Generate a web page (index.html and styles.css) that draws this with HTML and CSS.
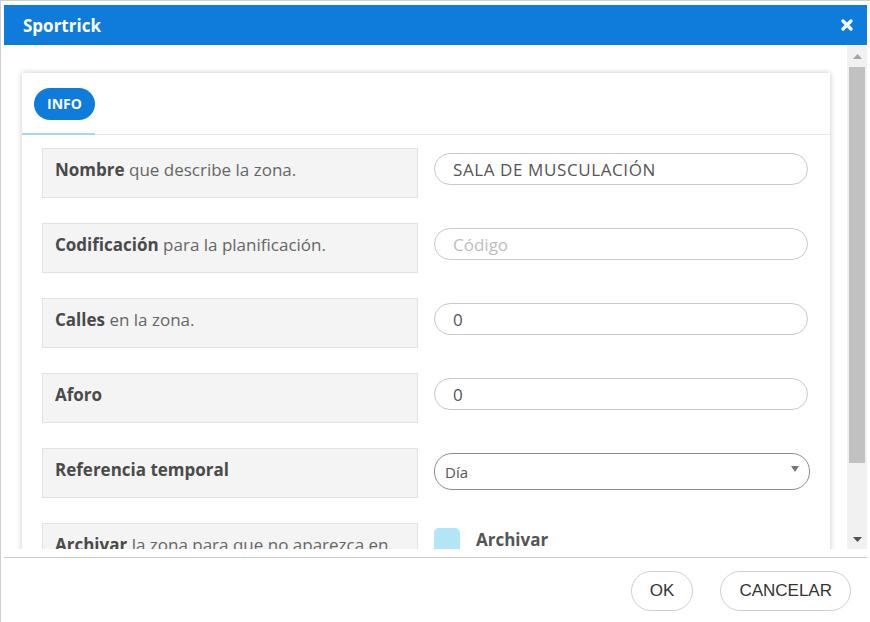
FILE: index.html
```html
<!DOCTYPE html>
<html lang="es">
  <head>
    <meta charset="UTF-8" />
    <meta name="viewport" content="width=device-width, initial-scale=1.0" />
    <title>Sportrick</title>
    <link rel="stylesheet" href="styles.css">
  </head>
  <body>
    <div class="dialog">
      <div class="titlebar">
        <span class="title">Sportrick</span>
        <svg class="close" width="12" height="12" viewBox="0 0 12 12">
          <path d="M2 2 L10 10 M10 2 L2 10" stroke="#fff" stroke-width="3.2" stroke-linecap="round" />
        </svg>
      </div>

      <div class="body">
        <div class="viewport">
          <div class="card">
            <div class="tabs">
              <div class="tabWrap"><span class="tab">INFO</span></div>
            </div>

            <div class="rows">
              <div class="row">
                <div class="label"><b>Nombre</b> que describe la zona.</div>
                <input class="input" type="text" value="SALA DE MUSCULACIÓN">
              </div>
              <div class="row">
                <div class="label"><b>Codificación</b> para la planificación.</div>
                <input class="input" type="text" placeholder="Código">
              </div>
              <div class="row">
                <div class="label"><b>Calles</b> en la zona.</div>
                <input class="input" type="text" value="0">
              </div>
              <div class="row">
                <div class="label"><b>Aforo</b></div>
                <input class="input" type="text" value="0">
              </div>
              <div class="row">
                <div class="label"><b>Referencia temporal</b></div>
                <div class="selectBox">
                  <span>Día</span>
                  <svg class="caret" width="8" height="6" viewBox="0 0 8 6"><path d="M0 0 H8 L4 6 Z" fill="#777" /></svg>
                </div>
              </div>
              <div class="row">
                <div class="label"><b>Archivar</b> la zona para que no aparezca en los listados de la planificación.</div>
                <div class="check">
                  <span class="checkbox"></span>
                  <span class="checkText">Archivar</span>
                </div>
              </div>
            </div>
          </div>
        </div>

        <div class="scrollbar">
          <svg class="arrow" width="9" height="5" viewBox="0 0 9 5"><path d="M0 5 L4.5 0 L9 5 Z" fill="#a3a3a3" /></svg>
          <div class="thumb"></div>
          <div class="track"></div>
          <svg class="arrow" width="9" height="5" viewBox="0 0 9 5"><path d="M0 0 L4.5 5 L9 0 Z" fill="#505050" /></svg>
        </div>
      </div>

      <div class="footer">
        <button class="btn">OK</button>
        <button class="btn">CANCELAR</button>
      </div>
    </div>
  </body>
</html>
```

FILE: styles.css
```css
* {
  margin: 0;
  padding: 0;
  box-sizing: border-box;
}
body {
  width: 870px;
  height: 622px;
  overflow: hidden;
  background-color: #fff;
  font-family: "Open Sans", Lato, sans-serif;
  color: #666;
}
.dialog {
  height: 622px;
  border-top: 1px solid #cfcfcf;
  border-left: 1px solid #cfcfcf;
  padding: 4px 3px 0 3px;
}
.titlebar {
  height: 40px;
  background-color: #0f7cdb;
  display: flex;
  align-items: center;
  justify-content: space-between;
  padding: 0 14px 0 19px;
}
.title {
  color: #fff;
  font-size: 17px;
  font-weight: 700;
}
.close {
  display: block;
}
.body {
  height: 503px;
  margin-top: 1px;
  display: flex;
}
.viewport {
  flex: 1;
  overflow: hidden;
  padding: 27px 17px 0 18px;
}
.card {
  background-color: #fff;
  box-shadow: 0 0 6px rgba(0, 0, 0, 0.22);
}
.tabs {
  border-bottom: 1px solid #e8e8e8;
}
.tabWrap {
  display: inline-block;
  padding: 15px 0 13px 12px;
  border-bottom: 2px solid #a8d4f5;
  margin-bottom: -1px;
}
.tab {
  display: block;
  width: 61px;
  height: 32px;
  line-height: 32px;
  border-radius: 16px;
  background-color: #0f7cdb;
  color: #fff;
  font-size: 14px;
  font-weight: 700;
  text-align: center;
}
.rows {
  padding: 13px 22px 0 20px;
}
.row {
  display: grid;
  grid-template-columns: 376px 1fr;
  column-gap: 16px;
  align-items: start;
  margin-bottom: 25px;
}
.label {
  min-height: 50px;
  background-color: #f4f4f4;
  border: 1px solid #e2e2e2;
  padding: 10px 12px;
  font-size: 17px;
  line-height: 22px;
  color: #666;
}
.label b {
  color: #4a4a4a;
  font-weight: 700;
}
.input {
  margin-top: 5px;
  height: 32px;
  width: 100%;
  border: 1px solid #c9c9c9;
  border-radius: 16px;
  padding: 0 18px;
  font-family: inherit;
  font-size: 17px;
  letter-spacing: 0.6px;
  color: #555;
  outline: none;
}
.input::placeholder {
  color: #bdbdbd;
  letter-spacing: 0;
}
.selectBox {
  margin-top: 5px;
  margin-right: -2px;
  height: 37px;
  border: 1px solid #8c8c8c;
  border-radius: 18px;
  padding: 0 10px;
  display: flex;
  align-items: center;
  justify-content: space-between;
  font-size: 15px;
  color: #555;
}
.caret {
  margin-top: -6px;
}
.check {
  margin-top: 5px;
  display: flex;
  align-items: center;
  gap: 16px;
}
.checkbox {
  width: 26px;
  height: 26px;
  border-radius: 5px;
  background-color: #b2e5f6;
}
.checkText {
  font-size: 17px;
  font-weight: 700;
  color: #555;
  margin-top: -4px;
}
.scrollbar {
  width: 20px;
  background-color: #f1f1f1;
  display: flex;
  flex-direction: column;
  align-items: center;
  padding: 8px 0 7px;
}
.arrow {
  display: block;
  flex-shrink: 0;
}
.thumb {
  width: 16px;
  height: 396px;
  margin-top: 8px;
  background-color: #c1c1c1;
}
.track {
  flex: 1;
}
.footer {
  margin-top: 8px;
  border-top: 1px solid #cfcfcf;
  display: flex;
  justify-content: flex-end;
  gap: 27px;
  padding: 13px 16px 0 0;
}
.btn {
  height: 40px;
  border: 1px solid #cfcfcf;
  border-radius: 20px;
  background-color: #fff;
  padding: 0 18px;
  font-family: "Liberation Sans", Arial, sans-serif;
  font-size: 17px;
  color: #333;
  cursor: pointer;
}
```
